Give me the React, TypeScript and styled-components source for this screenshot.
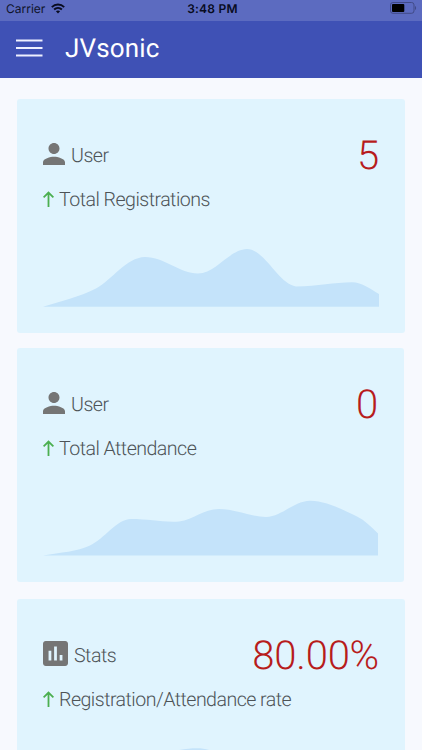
import React from "react";
import styled, { createGlobalStyle } from "styled-components";

const GlobalStyle = createGlobalStyle`
  html, body { margin: 0; height: 100%; overflow: hidden; background: #f7f9fe; }
  * { box-sizing: border-box; }
`;

const Screen = styled.div`
  width: 422px;
  height: 750px;
  overflow: hidden;
  background: #f7f9fe;
  font-family: Roboto, "Liberation Sans", sans-serif;
  text-rendering: geometricPrecision;
`;

const StatusBar = styled.div`
  height: 21px;
  padding: 0 5px 4px 6px;
  display: grid;
  grid-template-columns: 1fr auto 1fr;
  align-items: center;
  background: #5c6bc0;
  color: #10142c;
  font-family: Inter, "Liberation Sans", sans-serif;
  font-size: 12px;
  line-height: 17px;
`;

const Carrier = styled.div`
  display: flex;
  align-items: center;
  gap: 6px;
`;

const Clock = styled.div`
  padding-left: 2px;
  color: #080b20;
  font-weight: 600;
  letter-spacing: 0.25px;
`;

const BatterySlot = styled.div`
  display: flex;
  justify-content: flex-end;
  margin-top: -1px;
`;

const AppBar = styled.header`
  height: 57px;
  padding: 0 16px 3px;
  display: flex;
  align-items: center;
  gap: 22px;
  background: #3f51b5;
`;

const Title = styled.h1`
  margin: 1px 0 0;
  color: #fff;
  font-size: 26px;
  font-weight: 400;
  line-height: 30px;
  letter-spacing: 0.15px;
`;

const Cards = styled.main`
  padding: 21px 17px 0;
  display: flex;
  flex-direction: column;
`;

const Card = styled.section<{ $gap: number; $inset: number }>`
  flex: none;
  height: 234px;
  margin: 0 ${(p) => p.$inset}px ${(p) => p.$gap}px 0;
  padding: 33px 26px 0;
  border-radius: 3px;
  background: #e0f4fe;
`;

const Header = styled.div`
  height: 48px;
  display: flex;
  align-items: center;
  justify-content: space-between;
`;

const Label = styled.div`
  display: flex;
  align-items: center;
  gap: 6px;
  color: #4d5357;
  font-size: 19.6px;
  font-weight: 300;
  line-height: 24px;
  letter-spacing: -0.5px;

  svg { flex: none; margin-top: -5px; }
`;

const Value = styled.div`
  color: #b71c1c;
  font-size: 40px;
  font-weight: 300;
  line-height: 48px;
  letter-spacing: -0.2px;
`;

const Caption = styled.div`
  height: 24px;
  margin-top: 8px;
  display: flex;
  align-items: center;
  gap: 5px;
  color: #4d5357;
  font-size: 19.6px;
  font-weight: 300;
  line-height: 24px;
  letter-spacing: -0.53px;
  white-space: nowrap;

  svg { flex: none; margin-top: -2px; }
`;

const Chart = styled.svg`
  display: block;
  margin-top: 34px;
`;

const WifiIcon = () => (
  <svg width="14" height="11" viewBox="0 0 14 11" fill="none" stroke="#090c20" strokeWidth="1.9">
    <path d="M.8 4.1C4.3.7 9.7.7 13.2 4.1M3.1 6.5c2.2-2.1 5.6-2.1 7.8 0" />
    <path d="M7 10.5 4.9 8.3c1.2-1.1 3-1.1 4.2 0Z" fill="#090c20" stroke="none" />
  </svg>
);

const BatteryIcon = () => (
  <svg width="27" height="12" viewBox="0 0 27 12">
    <rect x=".5" y=".5" width="23.5" height="10.8" rx="2.4" fill="none" stroke="#414a87" />
    <rect x="2" y="2" width="12.3" height="8" rx="1" fill="#000" />
    <path d="M25 4v4c1.5-.5 1.5-3.5 0-4Z" fill="#414a87" />
  </svg>
);

const MenuIcon = () => (
  <svg width="27" height="18" viewBox="0 0 27 18" fill="none" stroke="#eef0ff" strokeWidth="2">
    <path d="M0 1.6h26.5M0 9h26.5M0 16.4h26.5" />
  </svg>
);

const UserIcon = () => (
  <svg width="22" height="22" viewBox="4 4 16 16" fill="#757575">
    <path d="M12 12c2.21 0 4-1.79 4-4s-1.79-4-4-4-4 1.79-4 4 1.79 4 4 4zm0 2c-2.67 0-8 1.34-8 4v2h16v-2c0-2.66-5.33-4-8-4z" />
  </svg>
);

const StatsIcon = () => (
  <svg width="25" height="25" viewBox="3 3 18 18" fill="#757575">
    <path d="M19 3H5c-1.1 0-2 .9-2 2v14c0 1.1.9 2 2 2h14c1.1 0 2-.9 2-2V5c0-1.1-.9-2-2-2zM9 17H7v-7h2v7zm4 0h-2V7h2v10zm4 0h-2v-4h2v4z" />
  </svg>
);

const ArrowIcon = () => (
  <svg width="11" height="16" viewBox="0 0 11 16" fill="none" stroke="#4caf50" strokeWidth="1.8">
    <path d="M5.5 16V1.5M.6 6.4 5.5 1.5l4.9 4.9" />
  </svg>
);

type CardData = {
  kind: "user" | "stats";
  label: string;
  value: string;
  caption: string;
  area: string;
  gap: number;
  inset: number;
};

const cards: CardData[] = [
  {
    kind: "user", label: "User", value: "5", caption: "Total Registrations",
    area: "M0 60.7 C18 55 36 51 53 42.5 C69 34 83 11.5 102 11 C121 11 137 27.5 155 27.5 C173 27.5 186 3.5 204 3 C222 3.5 235 37.5 253 40.5 C275 40.5 291 36.3 309 36.3 C319 36.3 328 43.5 336 48 V60.7Z",
    gap: 15, inset: 0,
  },
  {
    kind: "user", label: "User", value: "0", caption: "Total Attendance",
    area: "M0 60.5 C18 57.5 34 56.5 47 50.5 C62 43.5 73 24.5 88 24 C106 24 120 27.5 136 26.5 C151 24.5 160 14 176 14 C193 14 208 22 223 22 C239 21.5 251 6 267 5.8 C282 5.5 302 15.5 314 21.5 C322 25.5 328 31.5 335 38.5 V60.5Z",
    gap: 17, inset: 1,
  },
  {
    kind: "stats", label: "Stats", value: "80.00%", caption: "Registration/Attendance rate",
    area: "M0 61 C42 61 67 45 91 26 C115 7 137 2.2 154 2.2 C172 2.2 186 14 204 24 C250 44 290 38 336 49 V61Z",
    gap: 0, inset: 0,
  },
];

const StatCard = ({ data }: { data: CardData }) => (
  <Card $gap={data.gap} $inset={data.inset}>
    <Header>
      <Label>
        {data.kind === "user" ? <UserIcon /> : <StatsIcon />}
        <span>{data.label}</span>
      </Label>
      <Value>{data.value}</Value>
    </Header>
    <Caption>
      <ArrowIcon />
      <span>{data.caption}</span>
    </Caption>
    <Chart width="336" height="61" viewBox="0 0 336 61">
      <path d={data.area} fill="#c4e3fa" />
    </Chart>
  </Card>
);

export default function App() {
  return (
    <Screen>
      <GlobalStyle />
      <StatusBar>
        <Carrier>Carrier <WifiIcon /></Carrier>
        <Clock>3:48 PM</Clock>
        <BatterySlot><BatteryIcon /></BatterySlot>
      </StatusBar>
      <AppBar>
        <MenuIcon />
        <Title>JVsonic</Title>
      </AppBar>
      <Cards>
        {cards.map((data) => <StatCard key={data.caption} data={data} />)}
      </Cards>
    </Screen>
  );
}
